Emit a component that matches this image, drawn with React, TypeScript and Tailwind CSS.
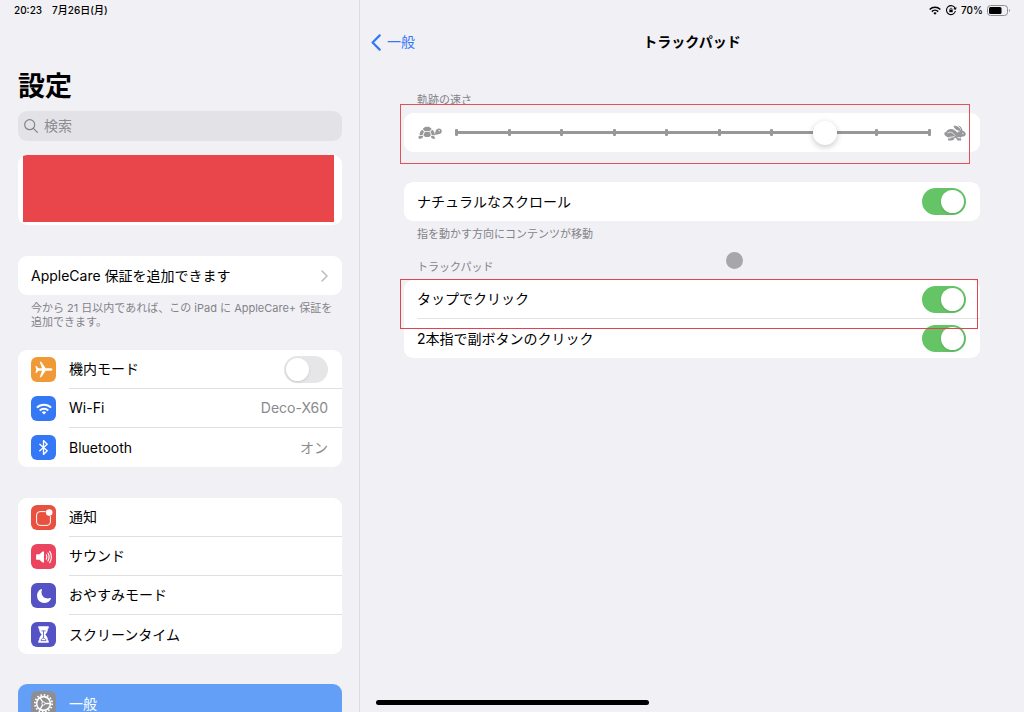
import React, { useState } from 'react'
import { IoBluetooth, IoMoon, IoVolumeHigh } from 'react-icons/io5'

const WifiIcon = ({ className }: { className: string }) => (
  <svg viewBox="0 0 24 18" className={className} fill="none" stroke="currentColor" strokeWidth="3">
    <path d="M1.4 6.9a15 15 0 0 1 21.2 0" />
    <path d="M5.6 11.2a9.1 9.1 0 0 1 12.8 0" />
    <path d="M12 17.4 8.6 14a4.8 4.8 0 0 1 6.8 0z" fill="currentColor" stroke="none" />
  </svg>
)

const AirplaneIcon = () => (
  <svg viewBox="0 0 25 25" className="size-full" fill="#fff">
    <path d="M21.5 12.5c0-.8-1.300-1.300-2.700-1.300h-4.100L10.200 4.700H8.700l2.300 6.500H7.300L5.500 8.900H4.400l.9 3.600-.9 3.600h1.100l1.800-2.300H11l-2.300 6.500h1.500l4.500-6.500h4.100c1.400 0 2.700-.5 2.700-1.300z" />
  </svg>
)

const NotificationIcon = () => (
  <svg viewBox="0 0 25 25" className="size-full" fill="none">
    <path d="M14.6 6.6H9a3.4 3.4 0 0 0-3.4 3.4v7A3.4 3.4 0 0 0 9 20.4h7a3.4 3.4 0 0 0 3.4-3.4v-5.8" stroke="#fff" strokeWidth="1" />
    <circle cx="18.2" cy="7.6" r="3.3" fill="#fff" />
  </svg>
)

const HourglassIcon = () => (
  <svg viewBox="0 0 25 25" className="size-full" fill="none">
    <path d="M7.3 4.2h10.4v2.2h-.8c0 3.2-1.2 4.6-2.6 6.1 1.4 1.5 2.6 2.9 2.6 6.1h.8v2.2H7.3v-2.2h.8c0-3.2 1.2-4.6 2.6-6.1-1.4-1.5-2.6-2.9-2.6-6.1h-.8z" fill="#fff" />
    <path d="M10.4 8.9h4.2M12.5 9v7.4M10 18.6c.2-1.6 1.2-2.2 2.5-2.8 1.3.6 2.3 1.2 2.5 2.8z" stroke="#5452c5" strokeWidth="0.8" />
  </svg>
)

const GearIcon = () => (
  <svg viewBox="0 0 25 25" className="size-full" fill="none" stroke="#fff">
    <circle cx="12.5" cy="12.5" r="8.6" strokeWidth="1.8" strokeDasharray="1.6 1.777" />
    <circle cx="12.5" cy="12.5" r="6.9" strokeWidth="1.6" />
    <circle cx="12.5" cy="12.5" r="1.6" strokeWidth="1" />
    <path d="M14.2 12.5h5M11.6 11 9.100 6.700M11.600 14l-2.500 4.300" strokeWidth="1.300" />
  </svg>
)

const TurtleIcon = () => (
  <svg viewBox="0 0 24 14" className="h-3.5 w-6 shrink-0" fill="#98989b" aria-hidden="true">
    <path d="M4.700 3C5.800 1.300 7.400.8 9.200.8s3.400.5 4.500 2.200l-1.900 1.900H6.600z" />
    <path d="M4 3.700 6 5.600 4.500 9.200H1.500C1.500 6.900 2.500 4.900 4 3.700z" />
    <path d="M14.400 3.700l-2 1.900 1.500 3.600h3c0-2.300-1-4.300-2.500-5.500z" />
    <path d="M6.900 5.700h4.600l1.500 3.500-1.900 1.900H7.300L5.400 9.200z" />
    <path d="M.5 10h4.700c-.3 1.800-1.300 2.800-2.900 2.800H.4c.5-.9.4-1.700.1-2.800zM13 10h3.100c.2 1.100.9 1.700 1.300 2.800h-2.700c-1.200-.5-1.700-1.400-1.700-2.800z" />
    <path d="M17.200 8.900c0-1.300-.1-2.400.3-3.700.6-1.900 1.900-2.800 3.400-2.800 1.800 0 2.900 1.300 2.900 2.800 0 1.700-1.200 2.600-2.700 2.700-1.300.1-2 1-3.900 1z" />
    <circle cx="21.200" cy="4.800" r="0.700" fill="#fff" />
  </svg>
)

const RabbitIcon = () => (
  <svg viewBox="0 0 22 16" className="h-4 w-[22px] shrink-0" aria-hidden="true">
    <g fill="#98989b">
      <path d="M.3 8.600c.2-1 .9-1.500 1.700-1.500C3 5 5.200 3.700 7.600 4c2.800.4 4.700 2.200 6.600 4.300l1.500 3.700-3.900.9-3.600-.2-4.400-.4C2 11.600.2 10.600.3 8.600z" />
      <path d="M9.600 1.200C12.500-.1 16.100 2.400 17 5.600c-3.500.4-6.700-1.500-7.400-4.400z" />
      <path d="M13.900.4c2.600.2 4.400 2.700 4.700 5.300 1.700.5 3.200 1.700 3.200 3.200 0 1.700-1.700 2.500-3.500 2.600l-2.100 1.200-3-2.600 1.100-4.600 2.700-.4c-.4-2-1.300-3.500-3.100-4.700z" />
      <path d="M4 13.400c2 .1 3.600-.2 4.700-.9l2 1.300c-.8 1.700-3.900 1.900-6.700 1.700zM11.600 12.800l2.800.4h2.200c.8.500.9 1.700.4 2.200h-3.400z" />
    </g>
    <path d="M3.300 8.100c2.600-1.800 5.500-.8 7.100 1.900M5.800 12c2.200.3 4.200-.2 5.800-1.500M10 4.300c1.800 1.500 3.700 2.100 5.600 2.100" fill="none" stroke="#fff" strokeWidth="0.700" />
    <circle cx="18.900" cy="8.300" r="0.600" fill="#fff" />
  </svg>
)

type SwitchProps = {
  id: string
  checked: boolean
  onChange: (value: boolean) => void
}

function Switch({ id, checked, onChange }: SwitchProps) {
  return (
    <input
      id={id}
      type="checkbox"
      role="switch"
      checked={checked}
      onChange={(e) => onChange(e.target.checked)}
      className="h-[27px] w-11 shrink-0 cursor-pointer appearance-none rounded-full bg-[#e6e6e8] p-0.5 before:block before:size-[23px] before:rounded-full before:bg-white before:shadow-sm checked:bg-[#65c466] checked:before:ml-[17px]"
    />
  )
}

type RowProps = {
  icon: React.ReactNode
  color: string
  last?: boolean
  children: React.ReactNode
}

function SidebarRow({ icon, color, last, children }: RowProps) {
  return (
    <div className="flex h-[39px] items-center gap-[13px] pl-[13px]">
      <span className={`flex size-[25px] shrink-0 items-center justify-center rounded-md text-white ${color}`}>{icon}</span>
      <div className={`flex h-full min-w-0 flex-1 items-center justify-between pr-3.5 ${last ? '' : 'border-b border-[#dfdfe2]'}`}>
        {children}
      </div>
    </div>
  )
}

const menuItems = [
  { label: '通知', color: 'bg-[#e8503f]', icon: <NotificationIcon /> },
  { label: 'サウンド', color: 'bg-[#ea445f]', icon: <IoVolumeHigh className="size-[18px]" /> },
  { label: 'おやすみモード', color: 'bg-[#5452c5]', icon: <IoMoon className="size-4" /> },
  { label: 'スクリーンタイム', color: 'bg-[#5452c5]', icon: <HourglassIcon /> },
]

const ticks = Array.from({ length: 10 }, (_, i) => i)

export default function App() {
  const [airplane, setAirplane] = useState(false)
  const [natural, setNatural] = useState(true)
  const [tapClick, setTapClick] = useState(true)
  const [twoFinger, setTwoFinger] = useState(true)
  const [speed, setSpeed] = useState(7)

  return (
    <div className="relative flex h-screen overflow-hidden bg-[#f1f0f5] font-['Inter','Noto_Sans_CJK_JP',sans-serif] text-sm leading-5 text-black">

      {/* SIDEBAR */}
      <aside className="w-[360px] shrink-0 overflow-hidden border-r border-[#dcdce0] pr-[17px] pl-[18px]">
        <div className="-ml-1 flex h-5 items-center gap-2.5 text-[10px] font-medium">
          <span>20:23</span>
          <span>7月26日(月)</span>
        </div>

        <h1 className="mt-[49px] text-[27px] leading-9 font-bold">設定</h1>

        <label className="mt-1.5 flex h-[30px] items-center gap-1.5 rounded-[9px] bg-[#e3e2e7] px-1.5 text-[#838388]">
          <svg viewBox="0 0 14 14" className="size-3.5 shrink-0" fill="none" stroke="currentColor" strokeWidth="1.2" strokeLinecap="round">
            <circle cx="5.7" cy="5.7" r="5" />
            <path d="m9.4 9.4 4 4" />
          </svg>
          <input type="search" aria-label="検索" placeholder="検索" className="w-full bg-transparent outline-none placeholder:text-[#8c8c91]" />
        </label>

        {/* Akun, disensor */}
        <div className="mt-3.5 h-[70px] overflow-hidden rounded-[9px] bg-white pr-2 pb-[3px] pl-[5px]">
          <div className="h-full bg-[#e9464b]" />
        </div>

        <a href="#applecare" className="mt-[31px] flex h-[39px] items-center justify-between rounded-[9px] bg-white pr-3.5 pl-[13px]">
          AppleCare 保証を追加できます
          <svg viewBox="0 0 7 12" className="h-3 w-[7px]" fill="none" stroke="#bcbcc0" strokeWidth="1.5" strokeLinecap="round" strokeLinejoin="round">
            <path d="m1 1 5 5-5 5" />
          </svg>
        </a>
        <p className="mt-1.5 pl-[13px] text-[11px] leading-3.5 whitespace-nowrap text-[#838388]">
          今から 21 日以内であれば、この iPad に AppleCare+ 保証を<br />追加できます。
        </p>

        <div className="mt-[21px] rounded-[9px] bg-white">
          <SidebarRow color="bg-[#f09a37]" icon={<AirplaneIcon />}>
            <label htmlFor="airplane">機内モード</label>
            <Switch id="airplane" checked={airplane} onChange={setAirplane} />
          </SidebarRow>
          <SidebarRow color="bg-[#3478f6]" icon={<WifiIcon className="h-3 w-4" />}>
            <a href="#wifi">Wi-Fi</a>
            <span className="text-[#8a8a8e]">Deco-X60</span>
          </SidebarRow>
          <SidebarRow color="bg-[#3478f6]" icon={<IoBluetooth className="size-[17px]" />} last>
            <a href="#bluetooth">Bluetooth</a>
            <span className="text-[#8a8a8e]">オン</span>
          </SidebarRow>
        </div>

        <nav className="mt-[31px] rounded-[9px] bg-white">
          {menuItems.map((item, i) => (
            <SidebarRow key={item.label} color={item.color} icon={item.icon} last={i === menuItems.length - 1}>
              <a href="#menu">{item.label}</a>
            </SidebarRow>
          ))}
        </nav>

        <nav className="mt-[30px] rounded-t-[9px] bg-[#649ff7] text-white">
          <SidebarRow color="bg-[#8e8e93]" icon={<GearIcon />} last>
            <a href="#general">一般</a>
          </SidebarRow>
        </nav>
      </aside>

      {/* DETAIL */}
      <main className="min-w-0 flex-1">
        <div className="flex h-5 items-center justify-end gap-1 pr-3.5 text-[10px] font-medium">
          <WifiIcon className="h-[9px] w-3" />
          <svg viewBox="0 0 12 12" className="size-3" fill="none" stroke="currentColor" strokeWidth="1.1">
            <path d="M10.2 4.5A4.500 4.500 0 1 0 10.400 7" />
            <path d="m8.800 4.600 1.700.5.700-1.700" />
            <path d="M4.300 5.700h3.400v2.500H4.300z" fill="currentColor" stroke="none" />
            <path d="M5 5.900v-.8a1 1 0 0 1 2 0v.8" strokeWidth="0.7" />
          </svg>
          <span>70%</span>
          <svg viewBox="0 0 23 11" className="h-[11px] w-[23px]" fill="none">
            <rect x="0.5" y="0.5" width="20" height="10" rx="3" stroke="#8d8d91" />
            <rect x="2" y="2" width="12.5" height="7" rx="1.5" fill="#000" />
            <path d="M22 4v3c.6-.3.9-.8.9-1.500S22.600 4.300 22 4z" fill="#8d8d91" />
          </svg>
        </div>

        <header className="grid h-11 grid-cols-[1fr_auto_1fr] items-center px-[11px]">
          <button type="button" className="flex cursor-pointer items-center gap-1.5 text-[#3478f6]">
            <svg viewBox="0 0 10 17" className="h-[17px] w-2.5" fill="none" stroke="currentColor" strokeWidth="2.2" strokeLinecap="round" strokeLinejoin="round">
              <path d="M8.700 1.400 1.600 8.500l7.100 7.100" />
            </svg>
            一般
          </button>
          <h2 className="font-bold">トラックパッド</h2>
        </header>

        <div className="px-11 pt-[29px]">
          <h3 className="mb-1.5 pl-[13px] text-[11px] leading-3.5 text-[#838388]">軌跡の速さ</h3>
          <div className="relative flex h-[39px] items-center gap-0.5 rounded-[9px] bg-white px-3.5">
            <TurtleIcon />
            <div className="relative flex h-6 flex-1 items-center">
              <div className="absolute inset-x-[11px] flex items-center justify-between">
                <div className="absolute inset-x-0 h-[3px] bg-[#98989b]" />
                {ticks.map((t) => (
                  <span key={t} className="h-[7px] w-[3px] rounded-[1px] bg-[#98989b]" />
                ))}
              </div>
              <input
                type="range"
                min={0}
                max={9}
                value={speed}
                onChange={(e) => setSpeed(Number(e.target.value))}
                aria-label="軌跡の速さ"
                className="relative h-6 w-full cursor-pointer appearance-none bg-transparent [&::-webkit-slider-thumb]:size-6 [&::-webkit-slider-thumb]:appearance-none [&::-webkit-slider-thumb]:rounded-full [&::-webkit-slider-thumb]:bg-white [&::-webkit-slider-thumb]:shadow-[0_2px_6px_rgba(0,0,0,0.22)]"
              />
            </div>
            <RabbitIcon />
            <div className="pointer-events-none absolute -top-[9px] right-2.5 -bottom-3 -left-1 border border-[#e0525a]" />
          </div>

          <div className="mt-[30px] flex h-[39px] items-center justify-between rounded-[9px] bg-white pr-3.5 pl-[13px]">
            <label htmlFor="natural">ナチュラルなスクロール</label>
            <Switch id="natural" checked={natural} onChange={setNatural} />
          </div>
          <p className="mt-1.5 pl-[13px] text-[11px] leading-3.5 text-[#838388]">指を動かす方向にコンテンツが移動</p>

          <h3 className="mt-[19px] mb-1.5 pl-[13px] text-[11px] leading-3.5 text-[#838388]">トラックパッド</h3>
          <div className="rounded-[9px] bg-white pl-[13px]">
            <div className="relative flex h-[39px] items-center justify-between border-b border-[#e3e3e6] pr-3.5">
              <label htmlFor="tap-click">タップでクリック</label>
              <Switch id="tap-click" checked={tapClick} onChange={setTapClick} />
              <div className="pointer-events-none absolute -top-px right-0.5 -bottom-[11px] -left-[17px] z-10 border border-[#e0454f]" />
            </div>
            <div className="flex h-[39px] items-center justify-between pr-3.5">
              <label htmlFor="two-finger">2本指で副ボタンのクリック</label>
              <Switch id="two-finger" checked={twoFinger} onChange={setTwoFinger} />
            </div>
          </div>
        </div>
      </main>

      {/* Pointer & home indicator */}
      <div className="pointer-events-none absolute top-[252px] left-[726px] size-[17px] rounded-full bg-[#a7a6ab]" />
      <div className="pointer-events-none absolute inset-x-0 bottom-[7px] flex justify-center">
        <div className="h-[5px] w-[273px] rounded-full bg-black" />
      </div>
    </div>
  )
}
